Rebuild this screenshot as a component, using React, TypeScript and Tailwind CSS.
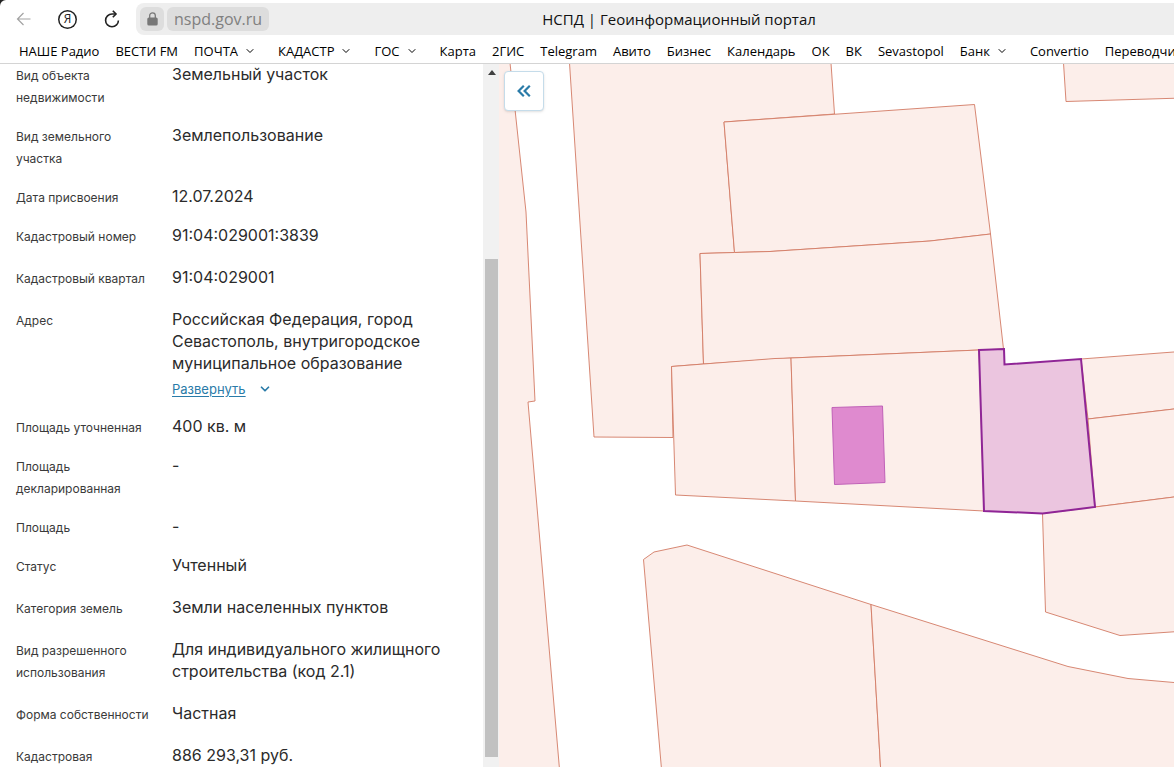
import { ChevronDown } from 'lucide-react';

interface Bookmark {
  title: string;
  isFolder?: boolean;
}

interface Field {
  label: string;
  value: string;
  expandable?: boolean;
  compact?: boolean;
}

const bookmarks: Bookmark[] = [
  { title: 'НАШЕ Радио' },
  { title: 'ВЕСТИ FM' },
  { title: 'ПОЧТА', isFolder: true },
  { title: 'КАДАСТР', isFolder: true },
  { title: 'ГОС', isFolder: true },
  { title: 'Карта' },
  { title: '2ГИС' },
  { title: 'Telegram' },
  { title: 'Авито' },
  { title: 'Бизнес' },
  { title: 'Календарь' },
  { title: 'ОК' },
  { title: 'ВК' },
  { title: 'Sevastopol' },
  { title: 'Банк', isFolder: true },
  { title: 'Convertio' },
  { title: 'Переводчи' },
];

const fields: Field[] = [
  { label: 'Вид объекта недвижимости', value: 'Земельный участок', compact: true },
  { label: 'Вид земельного участка', value: 'Землепользование', compact: true },
  { label: 'Дата присвоения', value: '12.07.2024', compact: true },
  { label: 'Кадастровый номер', value: '91:04:029001:3839' },
  { label: 'Кадастровый квартал', value: '91:04:029001' },
  {
    label: 'Адрес',
    value: 'Российская Федерация, город Севастополь, внутригородское муниципальное образование',
    expandable: true,
    compact: true,
  },
  { label: 'Площадь уточненная', value: '400 кв. м', compact: true },
  { label: 'Площадь декларированная', value: '-', compact: true },
  { label: 'Площадь', value: '-', compact: true },
  { label: 'Статус', value: 'Учтенный' },
  { label: 'Категория земель', value: 'Земли населенных пунктов' },
  { label: 'Вид разрешенного использования', value: 'Для индивидуального жилищного строительства (код 2.1)' },
  { label: 'Форма собственности', value: 'Частная' },
  { label: 'Кадастровая', value: '886 293,31 руб.' },
];

const parcels = [
  '480,40 510,63 514,100 526,212 535,401 528,402 560,775 480,775',
  '568,40 569.5,63 594,437 673,437.5 671.5,366.5 703.5,364 700,253.5 734.5,252.5 724,122 834.5,114 831,63 830,40',
  '724,122 974.5,104.5 990.5,234 930,241 770,251.5 734.5,252.5',
  '700,253.5 734.5,252.5 770,251.5 930,241 990.5,234 1003.5,349 979,350 791,358 703.5,364',
  '671.5,366.5 703.5,364 775,358.5 791,358 795.5,501 675.5,495',
  '791,358 979,350 984,511 795.5,501',
  '1062,40 1063.5,63 1066,101.5 1200,97.5 1200,40',
  '1081,359 1200,350 1200,406 1174,409 1088,419',
  '1088,419 1174,409 1200,406 1200,493 1174,497 1095,507',
  '1042.5,513.5 1095,507 1174,497 1200,493 1200,630 1120,635.5 1045.5,612',
  '662,775 643.5,559.5 654,552 687,545 871,604.5 881,775',
  '871,604.5 1068,666.5 1128,678.5 1174,682.5 1200,684 1200,775 881,775',
];

function BrowserBar() {
  return (
    <div className="flex items-center pt-[3px]">
      <div className="flex w-[136px] shrink-0 items-center justify-between pl-4 pr-4">
        <button aria-label="Назад" className="text-[#a3a3a3]">
          <svg className="h-4 w-[15px]" viewBox="0 0 15 16" fill="none" stroke="currentColor" strokeWidth="1.2">
            <path d="M14.5 8H1.5M7.5 2 1.5 8l6 6" />
          </svg>
        </button>
        <button
          aria-label="Яндекс"
          className="flex size-[19px] items-center justify-center rounded-full text-xs leading-none text-[#222] ring-[1.5px] ring-inset ring-[#222]"
        >
          Я
        </button>
        <button aria-label="Обновить" className="text-[#222]">
          <svg className="h-[18px] w-4" viewBox="0 0 16 18" fill="none" stroke="currentColor" strokeWidth="1.6">
            <path d="M12 4H8A6.4 6.4 0 1 0 14.4 10.4" />
            <path d="M8.8.8 12 4 8.8 7.2" />
          </svg>
        </button>
      </div>
      <div className="flex h-8 flex-1 items-center gap-[3px] rounded-l-lg bg-[#eeeeee] pl-1">
        <button aria-label="Защищённое соединение" className="flex h-6 w-6 items-center justify-center rounded-md bg-[#dddddd] text-[#777]">
          <svg className="h-[14px] w-[11px]" viewBox="0 0 11 14" fill="none">
            <path d="M2.7 6V3.6a2.8 2.8 0 0 1 5.6 0V6" stroke="currentColor" strokeWidth="1.3" />
            <rect x="0.3" y="5.4" width="10.4" height="8.2" rx="1.6" fill="currentColor" />
          </svg>
        </button>
        <button className="h-6 rounded-md bg-[#dddddd] px-[7px] text-base leading-6 text-[#808080]">nspd.gov.ru</button>
        <h1 className="flex-1 truncate pr-[88px] text-center text-[15px] leading-6 text-[#111]">
          НСПД | Геоинформационный портал
        </h1>
      </div>
    </div>
  );
}

function BookmarksBar() {
  return (
    <nav className="flex h-[29px] items-center gap-4 overflow-hidden border-b border-[#d4d4d4] pl-[19px] pt-1 text-[13px] leading-5 text-black">
      {bookmarks.map((item) => (
        <a key={item.title} href="#" className="flex shrink-0 items-center whitespace-nowrap">
          {item.title}
          {item.isFolder && <ChevronDown className="mx-1.5 size-3" strokeWidth={2} />}
        </a>
      ))}
    </nav>
  );
}

function FieldRow({ field }: { field: Field }) {
  return (
    <div className={`flex items-baseline leading-[22px] ${field.compact ? 'mb-[15px]' : 'mb-[18px]'}`}>
      <dt className="w-[156px] shrink-0 pr-4 text-xs leading-[22px] text-[#3a3a3a]">{field.label}</dt>
      <dd className="max-w-[280px] text-base leading-[22px] text-[#2b2b2b]">
        {field.value}
        {field.expandable && (
          <button className="mt-1 flex items-center gap-3 text-[13px] leading-[22px] text-[#2a7ba8]">
            <span className="underline underline-offset-2">Развернуть</span>
            <ChevronDown className="size-3.5" strokeWidth={3} />
          </button>
        )}
      </dd>
    </div>
  );
}

function Scrollbar() {
  return (
    <div className="flex w-4 shrink-0 flex-col bg-[#f1f1f1] pb-[10px] pl-[2px] pr-px">
      <div className="flex basis-[195px] justify-center pt-[6px]">
        <svg className="h-[5px] w-2" viewBox="0 0 8 5" fill="#404040">
          <path d="M4 0 8 5H0z" />
        </svg>
      </div>
      <div className="flex-1 bg-[#c1c1c1]" />
    </div>
  );
}

function CadastralMap() {
  return (
    <svg className="absolute inset-0 size-full" viewBox="499 64 675 703" preserveAspectRatio="xMinYMin slice">
      <g fill="#fceeea" stroke="#d27a64" strokeWidth="0.9">
        {parcels.map((points) => (
          <polygon key={points} points={points} />
        ))}
      </g>
      <polygon points="832,407.5 882.5,406 885,482.5 834.5,484.5" fill="#df8acf" stroke="#c062b8" strokeWidth="1" />
      <polygon
        points="979,350 1004,349 1004.5,364.5 1081,359 1095,507 1042.5,513.5 984,511"
        fill="#ebc5df"
        stroke="#8f2596"
        strokeWidth="2"
      />
    </svg>
  );
}

export default function App() {
  return (
    <div className="h-screen bg-[#222]">
      <div className="flex h-full flex-col overflow-hidden rounded-tl-md bg-white">
        <header className="shrink-0 font-['Open_Sans',sans-serif]">
          <BrowserBar />
          <BookmarksBar />
        </header>

        <main className="flex min-h-0 flex-1 font-['Inter',sans-serif]">
          {/* Object details */}
          <aside className="flex w-[499px] shrink-0">
            <dl className="-mt-px flex-1 overflow-hidden pl-4">
              {fields.map((field) => (
                <FieldRow key={field.label} field={field} />
              ))}
            </dl>
            <Scrollbar />
          </aside>

          {/* Map */}
          <section className="relative flex-1 overflow-hidden bg-white">
            <CadastralMap />
            <button
              aria-label="Свернуть панель"
              className="absolute left-[5px] top-[7px] flex size-10 items-center justify-center rounded border border-[#c5dcea] bg-white text-[#2a7ba8] shadow-sm"
            >
              <svg className="h-3 w-[14px]" viewBox="0 0 14 12" fill="none" stroke="currentColor" strokeWidth="2.2">
                <path d="M6.8.8 1.6 6l5.2 5.2M12.8.8 7.6 6l5.2 5.2" />
              </svg>
            </button>
          </section>
        </main>
      </div>
    </div>
  );
}
